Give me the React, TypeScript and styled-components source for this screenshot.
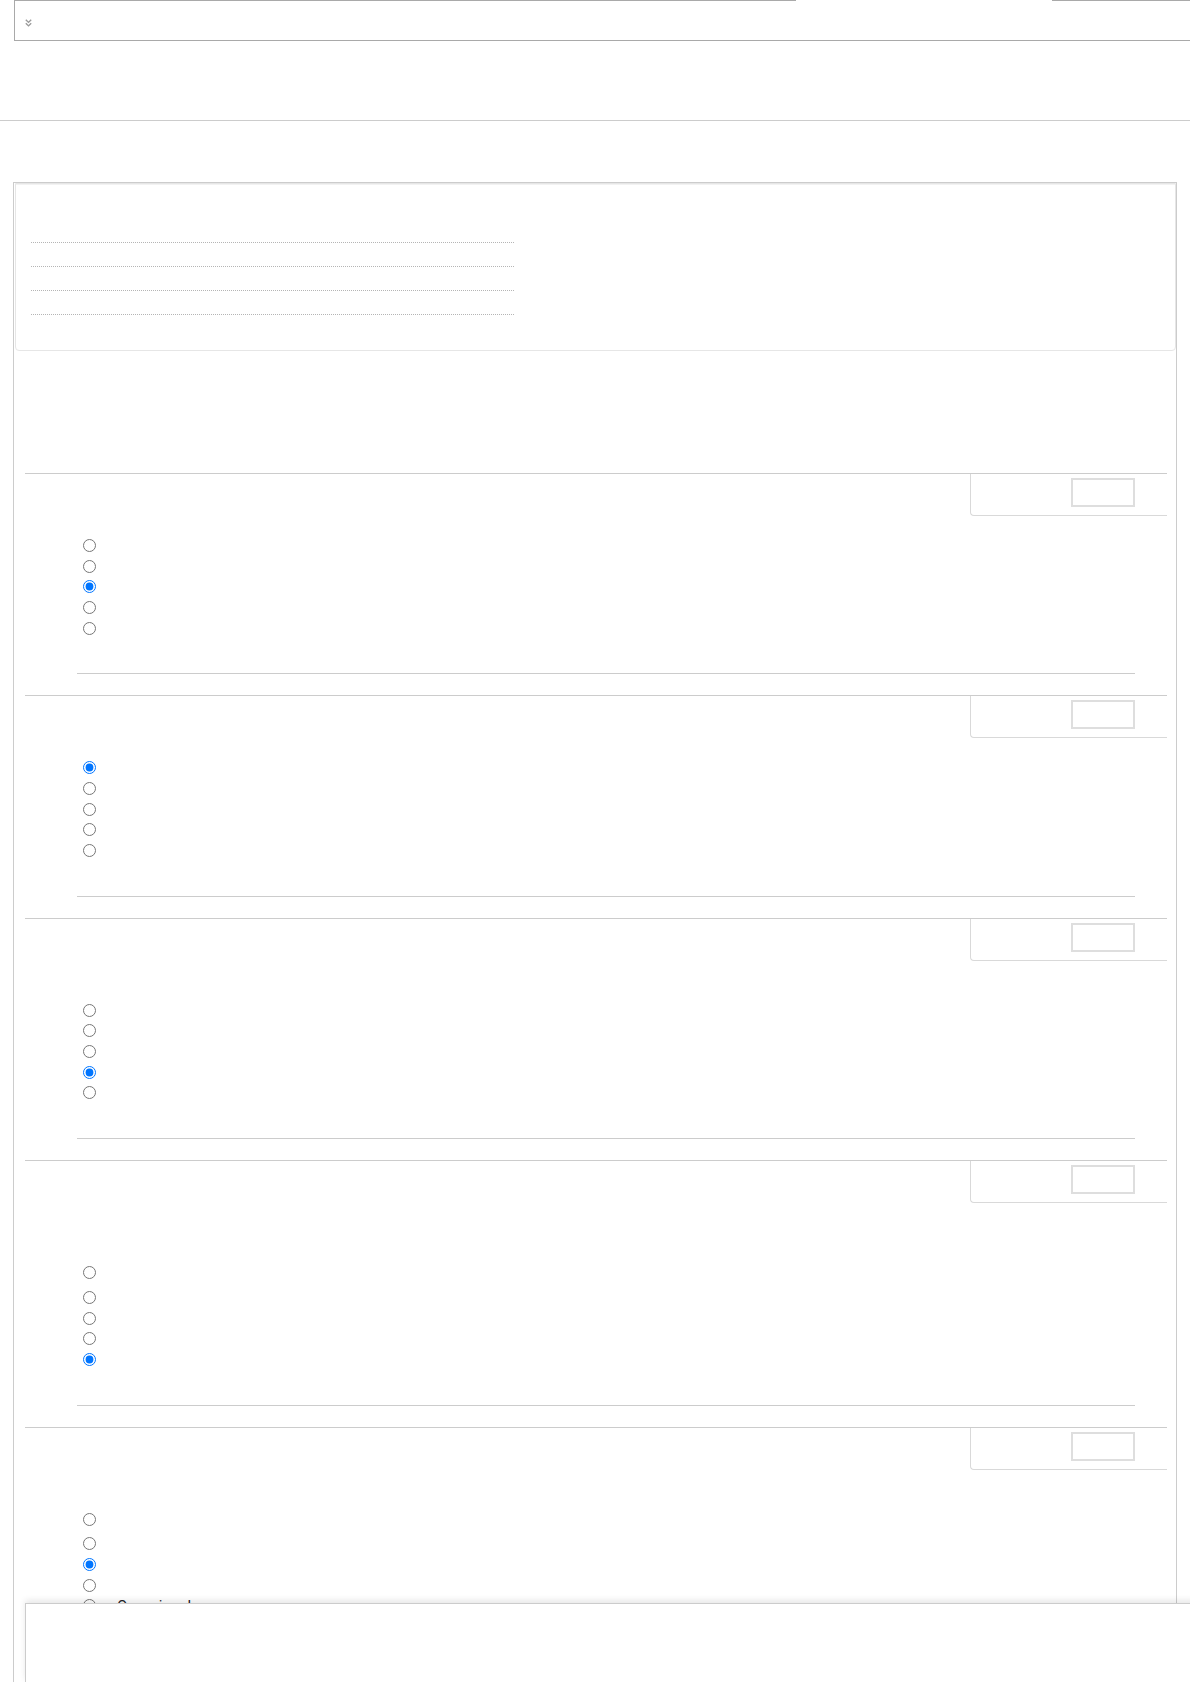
import React from "react";
import styled, { createGlobalStyle } from "styled-components";

const Global = createGlobalStyle`
  html, body {
    margin: 0;
    padding: 0;
    background: #ffffff;
    font-family: Roboto, "Liberation Sans", Arial, sans-serif;
    font-size: 15px;
    color: #1d2125;
    overflow-x: hidden;
  }
`;

const Page = styled.div`
  width: 1190px;
  padding-bottom: 120px;
`;

const TopBar = styled.div`
  margin-left: 14px;
  height: 39px;
  border-left: 1px solid #a9a9a9;
  border-bottom: 1px solid #a9a9a9;
  padding-top: 1px;
  background: linear-gradient(
      to right,
      #a9a9a9 0,
      #a9a9a9 781px,
      transparent 781px,
      transparent 1037px,
      #a9a9a9 1037px
    )
    top left / 100% 1px no-repeat;
  padding-left: 10px;
`;

const Chevron = styled.svg`
  display: block;
  margin-top: 18px;
`;

const Rule = styled.hr`
  margin: 79px 0 0 0;
  border: 0;
  height: 1px;
  background: #cccccc;
`;

const MainBox = styled.div`
  margin: 61px 0 0 13px;
  width: 1162px;
  border: 1px solid #cccccc;
  border-bottom: 0;
  padding-bottom: 200px;
`;

const SummaryBox = styled.div`
  margin: 0 0 0 1px;
  border: 1px solid #e6e6e6;
  border-radius: 0 0 4px 4px;
  box-shadow: inset 0 1px 0 #f2f2f2;
  padding: 35px 15px;
`;

const SummaryTable = styled.div`
  width: 483px;
  display: flex;
  flex-direction: column;
`;

const SummaryRow = styled.div`
  height: 23px;
  border-bottom: 1px dotted #b5b5b5;
`;

const Questions = styled.div`
  margin: 122px 9px 0 11px;
`;

const Question = styled.div`
  border-top: 1px solid #cccccc;
  margin-bottom: 21px;
`;

const InfoBox = styled.div`
  float: right;
  width: 196px;
  height: 41px;
  border-left: 1px solid #d9d9d9;
  border-bottom: 1px solid #d9d9d9;
  border-bottom-left-radius: 4px;
  display: flex;
  justify-content: flex-end;
  align-items: flex-start;
`;

const GradeBox = styled.div`
  margin: 4px 32px 0 0;
  width: 60px;
  height: 25px;
  border: 2px solid #dedede;
`;

const Body = styled.div`
  padding: 41px 32px 0 52px;
`;

const QText = styled.div<{ $lines: number }>`
  height: ${(p) => p.$lines * 20}px;
`;

const Options = styled.div`
  padding-left: 6px;
  display: flex;
  flex-direction: column;
`;

const Option = styled.label<{ $tall?: boolean }>`
  display: flex;
  align-items: flex-start;
  height: ${(p) => (p.$tall ? 24.7 : 20.7)}px;
  line-height: 20.7px;
  font-size: 15px;
  color: #1d2125;
`;

const Radio = styled.input`
  width: 13px;
  height: 13px;
  margin: 3.85px 7px 0 0;
  flex: none;
`;

const AnswerNumber = styled.span`
  margin-right: 2px;
`;

const Divider = styled.div`
  margin-top: 35px;
  height: 1px;
  background: #cccccc;
`;

const Footer = styled.div`
  position: fixed;
  left: 25px;
  right: -10px;
  bottom: 0;
  height: 78px;
  background: #ffffff;
  border-top: 1px solid #cccccc;
  border-left: 1px solid #cccccc;
  box-shadow: 0 -3px 6px rgba(0, 0, 0, 0.09);
`;

type Q = {
  lines: number;
  checked: number;
  firstTall: boolean;
  labels?: Record<number, [string, string]>;
};

const questions: Q[] = [
  { lines: 1, checked: 2, firstTall: false },
  { lines: 1, checked: 0, firstTall: false },
  { lines: 2, checked: 3, firstTall: false },
  { lines: 3, checked: 4, firstTall: true },
  { lines: 2, checked: 2, firstTall: true, labels: { 4: ["e.", "Occasional"] } },
];

export default function App() {
  return (
    <Page>
      <Global />
      <TopBar>
        <Chevron width="7" height="8" viewBox="0 0 7 8" aria-hidden="true">
          <path d="M0.8 0.8 L3.5 3.4 L6.2 0.8" fill="none" stroke="#9a9a9a" strokeWidth="1.4" />
          <path d="M0.8 4.3 L3.5 6.9 L6.2 4.3" fill="none" stroke="#9a9a9a" strokeWidth="1.4" />
        </Chevron>
      </TopBar>
      <Rule />
      <MainBox>
        <SummaryBox>
          <SummaryTable>
            <SummaryRow />
            <SummaryRow />
            <SummaryRow />
            <SummaryRow />
          </SummaryTable>
        </SummaryBox>
        <Questions>
          {questions.map((q, qi) => (
            <Question key={qi}>
              <InfoBox>
                <GradeBox />
              </InfoBox>
              <Body>
                <QText $lines={q.lines} />
                <Options>
                  {[0, 1, 2, 3, 4].map((oi) => {
                    const label = q.labels?.[oi];
                    return (
                      <Option key={oi} $tall={q.firstTall && oi === 0}>
                        <Radio
                          type="radio"
                          name={`q${qi}`}
                          defaultChecked={oi === q.checked}
                        />
                        {label && (
                          <>
                            <AnswerNumber>{label[0]}</AnswerNumber>
                            <span>{label[1]}</span>
                          </>
                        )}
                      </Option>
                    );
                  })}
                </Options>
                <Divider />
              </Body>
            </Question>
          ))}
        </Questions>
      </MainBox>
      <Footer />
    </Page>
  );
}
